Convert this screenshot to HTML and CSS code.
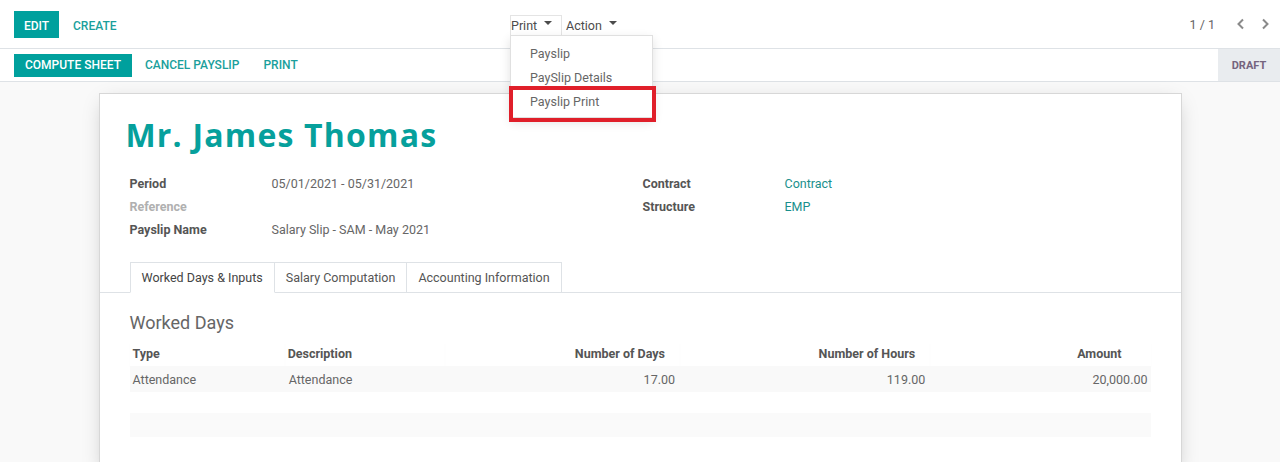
FILE: index.html
```html
<!DOCTYPE html>
<html>
<head>
<meta charset="utf-8">
<link rel="stylesheet" href="styles.css">
</head>
<body>
<header class="cp">
  <div class="cp-left">
    <button class="btn btn-primary btn-edit">EDIT</button>
    <button class="btn btn-link btn-create">CREATE</button>
  </div>
  <div class="cp-mid">
    <div class="dd">
      <button class="dd-toggle open">Print <span class="caret"></span></button>
      <ul class="dd-menu">
        <li>Payslip</li>
        <li>PaySlip Details</li>
        <li class="hl">Payslip Print</li>
      </ul>
    </div>
    <div class="dd">
      <button class="dd-toggle">Action <span class="caret"></span></button>
    </div>
  </div>
  <div class="cp-right">
    <span class="pager-val">1 / 1</span>
    <span class="pager-btn"><svg width="10" height="12" viewBox="0 0 10 12"><path d="M7 1.5 L2.5 6 L7 10.5" fill="none" stroke="#8a8a8a" stroke-width="2"/></svg></span>
    <span class="pager-btn"><svg width="10" height="12" viewBox="0 0 10 12"><path d="M3 1.5 L7.5 6 L3 10.5" fill="none" stroke="#8a8a8a" stroke-width="2"/></svg></span>
  </div>
</header>
<div class="statusbar">
  <div class="sb-buttons">
    <button class="btn btn-primary btn-sm">COMPUTE SHEET</button>
    <button class="btn btn-link btn-sm">CANCEL PAYSLIP</button>
    <button class="btn btn-link btn-sm">PRINT</button>
  </div>
  <div class="sb-status">DRAFT</div>
</div>
<main class="bg">
  <div class="sheet">
    <h1 class="title">Mr. James Thomas</h1>
    <div class="groups">
      <div class="group">
        <div class="lbl">Period</div><div class="val">05/01/2021 - 05/31/2021</div>
        <div class="lbl muted">Reference</div><div class="val"></div>
        <div class="lbl">Payslip Name</div><div class="val">Salary Slip - SAM - May 2021</div>
      </div>
      <div class="group">
        <div class="lbl">Contract</div><div class="val link">Contract</div>
        <div class="lbl">Structure</div><div class="val link">EMP</div>
      </div>
    </div>
    <div class="tabs">
      <div class="tab active">Worked Days &amp; Inputs</div>
      <div class="tab">Salary Computation</div>
      <div class="tab">Accounting Information</div>
    </div>
    <div class="tab-pane">
      <h2 class="sep">Worked Days</h2>
      <table class="list">
        <colgroup>
          <col style="width:155px"><col style="width:160px"><col style="width:235px"><col style="width:250px"><col style="width:220px">
        </colgroup>
        <thead>
          <tr><th>Type</th><th>Description</th><th class="num h-days">Number of Days</th><th class="num h-hours">Number of Hours</th><th class="num h-amt">Amount</th></tr>
        </thead>
        <tbody>
          <tr class="odd"><td>Attendance</td><td>Attendance</td><td class="num">17.00</td><td class="num">119.00</td><td class="num amt">20,000.00</td></tr>
          <tr class="empty"><td colspan="5"></td></tr>
          <tr class="odd empty2"><td colspan="5"></td></tr>
        </tbody>
      </table>
    </div>
  </div>
</main>
</body>
</html>
```
FILE: styles.css
```css
* { box-sizing: border-box; }
html, body { margin: 0; padding: 0; }
body {
  font-family: Roboto, "Liberation Sans", sans-serif;
  font-size: 12.5px;
  color: #4c4c4c;
  background: #f9f9f9;
  height: 462px;
  overflow: hidden;
}
button { font-family: inherit; cursor: pointer; }
ul { margin: 0; padding: 0; list-style: none; }

.cp {
  height: 49px;
  background: #fff;
  border-bottom: 1px solid #dee2e6;
  display: grid;
  grid-template-columns: 510px 1fr auto;
  align-items: center;
  padding: 0 0 0 14px;
}
.cp-left { display: flex; align-items: center; gap: 1px; margin-left: -14px; padding-left: 14px; padding-top: 1px; }
.btn {
  border: 1px solid transparent;
  background: transparent;
  font-size: 12px;
  font-weight: 500;
  padding: 0 10px;
  border-radius: 0;
  line-height: 1;
}
.btn-primary { background: #00a09d; color: #fff; border-color: #00a09d; }
.btn-link { color: #1a9f9c; }
.btn-edit { height: 27px; width: 45px; padding: 2px 0 0 0; }
.btn-create { padding-left: 12px; padding-top: 2px; }
.btn-sm { height: 23px; padding: 0 10px; }

.cp-mid { display: flex; align-items: center; margin-left: -14px; padding-top: 2px; }
.dd { position: relative; }
.dd-toggle {
  border: 1px solid transparent;
  background: #fff;
  color: #4c4c4c;
  font-size: 12.5px;
  height: 21px;
  padding: 0 10px 0 0;
  display: flex;
  align-items: center;
  gap: 4px;
}
.dd-toggle.open { border-color: #e4e4e4; border-bottom-color: #fff; padding-left: 0; width: 52px; margin-right: 3px; }
.caret {
  display: inline-block;
  width: 0; height: 0;
  border-left: 4px solid transparent;
  border-right: 4px solid transparent;
  border-top: 4px solid #4c4c4c;
  margin-left: 3px;
  position: relative; top: -2px;
}
.dd-menu {
  position: absolute;
  top: 20px;
  left: 0;
  width: 143px;
  background: #fff;
  border: 1px solid rgba(0,0,0,0.12);
  box-shadow: 0 4px 10px rgba(0,0,0,0.12);
  padding: 6px 0 3px;
  z-index: 10;
}
.dd-menu li {
  height: 24px;
  line-height: 24px;
  padding-left: 19px;
  color: #666;
  font-size: 12.5px;
  position: relative;
}
.dd-menu li.hl::after {
  content: "";
  position: absolute;
  left: -2px; right: -4px;
  top: -4px; bottom: -8px;
  border: 4px solid #e01f2a;
}

.cp-right { display: flex; align-items: center; padding-right: 3px; color: #666; }
.pager-val { margin-right: 14px; font-size: 12.5px; }
.pager-btn { width: 24px; display: flex; justify-content: center; }

.statusbar {
  height: 33px;
  background: #fff;
  border-bottom: 1px solid #dee2e6;
  display: flex;
  align-items: stretch;
  justify-content: space-between;
}
.sb-buttons { display: flex; align-items: center; padding-left: 14px; gap: 2px; }
.sb-buttons .btn-link { padding: 0 10px; }
.sb-status {
  width: 62px;
  background: #e9ecef;
  color: #75647e;
  font-size: 11px;
  font-weight: 700;
  display: flex;
  align-items: center;
  justify-content: center;
  padding-top: 1px;
}

.bg { padding-top: 11px; }
.sheet {
  width: 1083px;
  margin: 0 auto;
  background: #fff;
  border: 1px solid #d7d7d7;
  box-shadow: 0 5px 20px -6px rgba(0,0,0,0.25);
  min-height: 380px;
  padding-top: 21px;
}
.title {
  margin: 0 0 0 26px;
  font-family: "Open Sans", sans-serif;
  font-weight: 700;
  font-size: 32px;
  line-height: 40px;
  color: #06a09c;
  letter-spacing: 1.2px;
}
.groups { display: flex; padding: 17px 0 0 30px; }
.group {
  display: grid;
  grid-template-columns: 142px 1fr;
  grid-auto-rows: 23px;
  align-items: center;
  width: 513px;
}
.lbl { font-weight: 700; color: #555; }
.lbl.muted { color: #b0b0b0; }
.val { color: #666; }
.val.link { color: #1a8f8c; }

.tabs {
  margin-top: 21px;
  border-bottom: 1px solid #dee2e6;
  display: flex;
  padding-left: 30px;
  height: 31px;
}
.tab {
  height: 31px;
  border: 1px solid #dee2e6;
  border-left: none;
  padding: 0 11px;
  display: flex;
  align-items: center;
  color: #555;
  background: #fff;
}
.tab:first-child { border-left: 1px solid #dee2e6; }
.tab.active { border-bottom-color: #fff; color: #444; }

.tab-pane { padding: 0 30px; }
.sep {
  margin: 19px 0 0;
  font-size: 18px;
  font-weight: 400;
  color: #666;
  line-height: 22px;
}
.list {
  margin-top: 7px;
  width: 1021px;
  border-collapse: collapse;
  table-layout: fixed;
}
.list th {
  text-align: left;
  font-weight: 700;
  color: #555;
  height: 25px;
  padding: 0 3px;
  box-shadow: 0 2px 2px -1px rgba(0,0,0,0.08);
}
.list td {
  height: 26px;
  padding: 0 3px;
  color: #666;
}
.list td:nth-child(2) { padding-left: 4px; }
.list .num { text-align: right; }
.list td.num { padding-right: 5px; }
.list td.amt { padding-right: 3px; }
.list th.h-days, .list th.h-hours { padding-right: 15px; }
.list th.h-amt { padding-right: 29px; }
.list tr.odd td { background: #f9f9f9; }
.list tr.empty td { height: 21px; background: #fff; }
.list tr.empty2 td { height: 24px; background: #fafafa; }
```
